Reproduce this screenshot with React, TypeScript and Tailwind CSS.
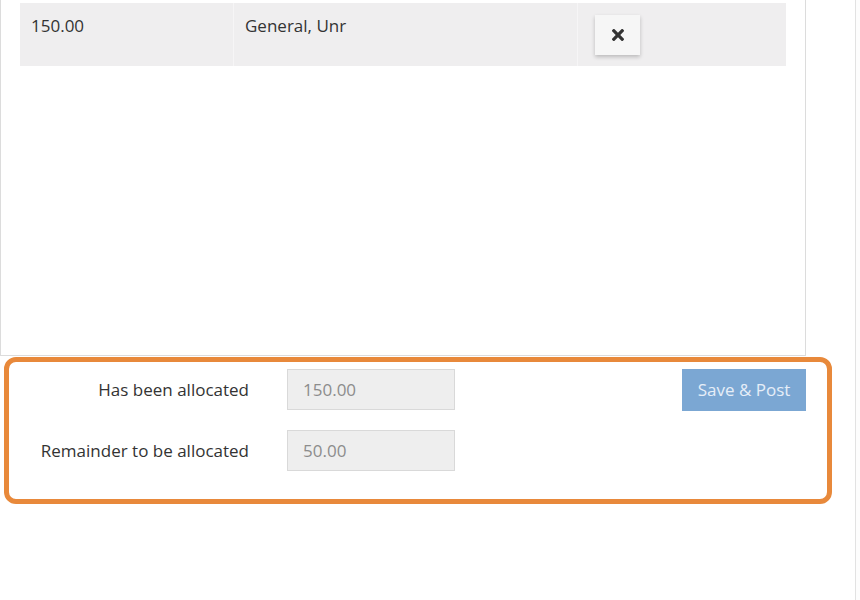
import React from "react";

function TimesIcon() {
  return (
    <svg width="12" height="12" viewBox="0 80 352 352" className="block" aria-hidden="true">
      <path
        fill="#333"
        d="M242.72 256l100.07-100.07c12.28-12.28 12.28-32.19 0-44.48l-22.24-22.24c-12.28-12.280-32.19-12.28-44.48 0L176 189.28 75.93 89.21c-12.28-12.28-32.19-12.28-44.48 0L9.21 111.45c-12.28 12.28-12.28 32.19 0 44.48L109.28 256 9.21 356.07c-12.28 12.28-12.28 32.19 0 44.48l22.24 22.24c12.28 12.28 32.2 12.28 44.48 0L176 322.72l100.07 100.07c12.28 12.28 32.2 12.28 44.48 0l22.24-22.24c12.28-12.28 12.28-32.19 0-44.48L242.72 256z"
      />
    </svg>
  );
}

export default function App() {
  return (
    <div
      className="w-[860px] h-[600px] bg-white flex text-[17px] text-[#333] overflow-hidden"
      style={{ fontFamily: '"Open Sans", "Noto Sans", sans-serif' }}
    >
      <div className="w-[855px] flex flex-col">
        {/* Panel with table */}
        <div className="w-[806px] h-[356px] border-l border-r border-b border-[#dcdcdc] pt-[3px] pl-[19px]">
          <div className="w-[766px] h-[63px] bg-[#efeeef] flex">
            <div className="w-[213px] pl-[11px] pt-[11px] leading-[23px]">150.00</div>
            <div className="w-[344px] border-l border-[#f6f5f6] pl-[11px] pt-[11px] leading-[23px]">
              General, Unr
            </div>
            <div className="flex-1 border-l border-[#f6f5f6] pl-[17px] pt-[12px]">
              <div className="w-[45px] h-[40px] bg-[#f6f6f6] flex items-center justify-center shadow-[0_2px_4px_rgba(0,0,0,0.22)]">
                <TimesIcon />
              </div>
            </div>
          </div>
        </div>

        {/* Highlighted footer */}
        <div className="ml-[4px] mt-[1px] w-[828px] h-[147px] border-[5px] border-[#e8893b] rounded-[12px] pt-[7px] flex">
          <div className="flex flex-col gap-[20px]">
            <div className="flex items-center">
              <div className="w-[240px] text-right">Has been allocated</div>
              <div className="ml-[38px] w-[168px] h-[41px] bg-[#eeeeee] border border-[#d9d9d9] pl-[15px] flex items-center text-[#8c8c8c]">
                150.00
              </div>
            </div>
            <div className="flex items-center">
              <div className="w-[240px] text-right">Remainder to be allocated</div>
              <div className="ml-[38px] w-[168px] h-[41px] bg-[#eeeeee] border border-[#d9d9d9] pl-[15px] flex items-center text-[#8c8c8c]">
                50.00
              </div>
            </div>
          </div>
          <div className="ml-[227px]">
            <div className="w-[124px] h-[42px] bg-[#7ba7d3] flex items-center justify-center text-[#e6eef8]">
              Save &amp; Post
            </div>
          </div>
        </div>
      </div>
      <div className="flex-1 border-l border-[#e2e2e2] bg-[#fdfdfd]" />
    </div>
  );
}
